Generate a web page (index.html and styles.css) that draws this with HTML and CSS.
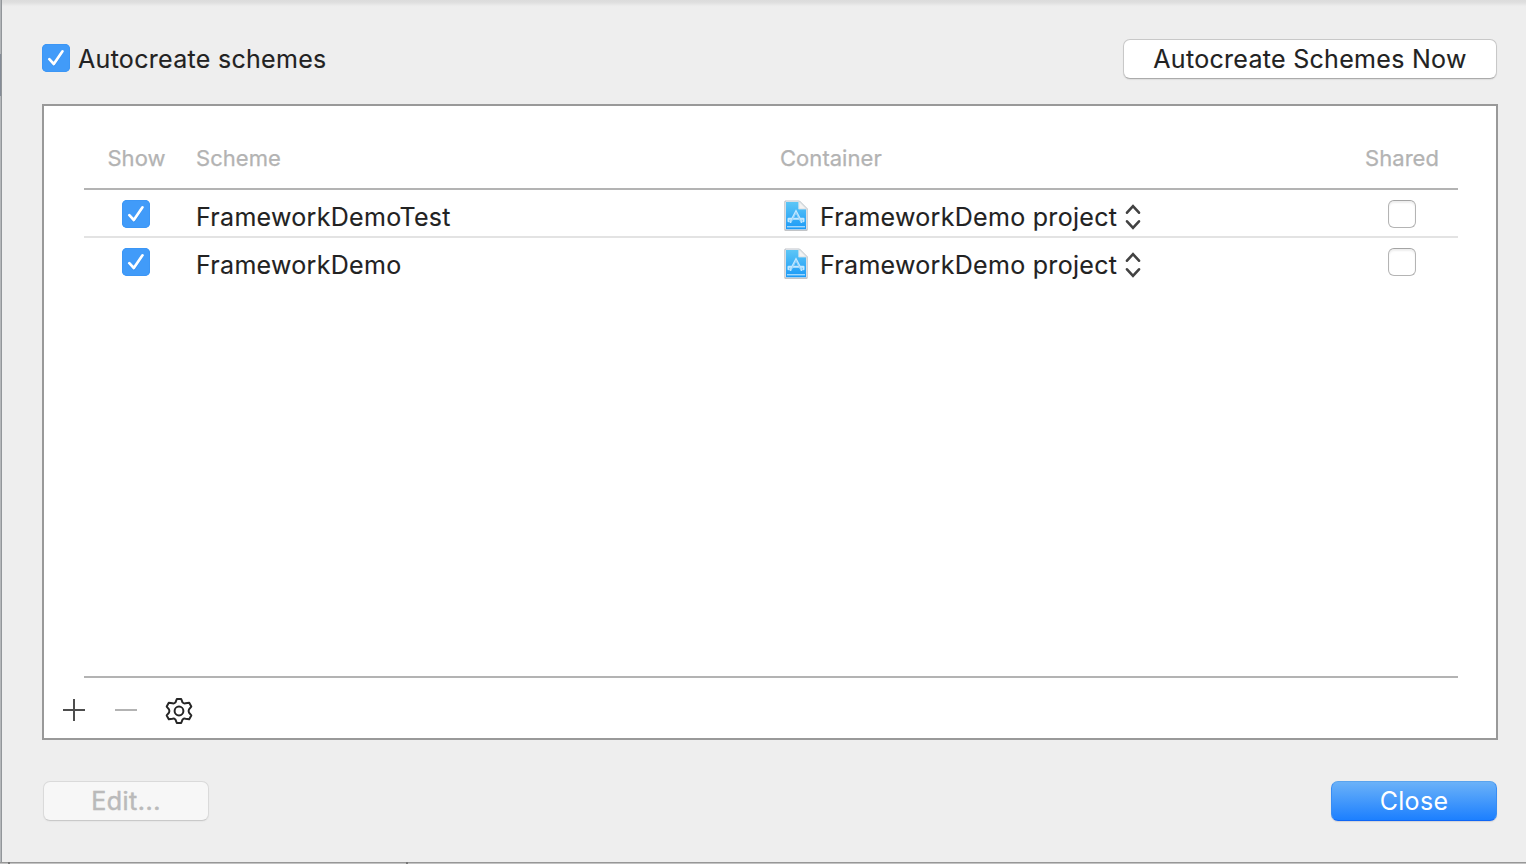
FILE: index.html
```
<!DOCTYPE html>
<html lang="en">
<head>
<meta charset="utf-8">
<title>Manage Schemes</title>
<link rel="stylesheet" href="styles.css">
</head>
<body>
<svg width="0" height="0" class="defs" aria-hidden="true">
  <defs>
    <linearGradient id="doc-fill" x1="0" y1="0" x2="0" y2="1"><stop offset="0" stop-color="#5cc6f6"/><stop offset="1" stop-color="#1b9af7"/></linearGradient>
    <symbol id="check" viewBox="0 0 28 28">
      <path d="M7.3 16.2 12 21 20.5 7.5" fill="none" stroke="#1f78d6" stroke-opacity=".35" stroke-width="2.6" stroke-linecap="round" stroke-linejoin="round"/>
      <path d="M7.3 15.2 11.8 20 20.5 7.3" fill="none" stroke="#fff" stroke-width="2.7" stroke-linecap="round" stroke-linejoin="round"/>
    </symbol>
    <symbol id="project" viewBox="0 0 24 32">
      <path d="M.5 1.5H16L23.5 9V31H.5Z" fill="#b5b5b5" opacity=".6"/>
      <path d="M1 1H15.5L23 8.5V30H1Z" fill="#f6fbff" stroke="#a3abb1" stroke-width=".7"/>
      <path d="M2 2H14.5V9.3H22V29.2H2Z" fill="url(#doc-fill)"/>
      <path d="M15 1.5V8.8H22.3Z" fill="#f3f3f3" stroke="#c8d0d5" stroke-width=".5"/>
      <path d="M3 26.8H21" stroke="#d8f0ff" stroke-width="1"/>
      <path d="M6.5 22 12 11.5 17.5 22M4.5 18.8H19.5M4.5 18.8V21.3M19.5 18.8V21.3" fill="none" stroke="#c3e8ff" stroke-width="2" stroke-linecap="round"/>
      <path d="M12 12.5 7 22M12 12.5 17 22" fill="none" stroke="#62b9f2" stroke-width=".5"/>
    </symbol>
    <symbol id="updown" viewBox="0 0 16 26">
      <path d="M2 8.7 8 2.2 14 8.7M2 17.3 8 23.8 14 17.3" fill="none" stroke="#424242" stroke-width="2.6" stroke-linecap="round" stroke-linejoin="miter"/>
    </symbol>
  </defs>
</svg>
<main class="sheet">
  <header class="topbar">
    <label class="option"><span class="box on"><svg><use href="#check"/></svg></span><span class="label">Autocreate schemes</span></label>
    <button class="button">Autocreate Schemes Now</button>
  </header>
  <section class="panel">
    <div class="table">
      <div class="row head"><span class="center show">Show</span><span>Scheme</span><span>Container</span><span class="center">Shared</span></div>
      <div class="row item">
        <span class="cell-box"><span class="box on"><svg><use href="#check"/></svg></span></span>
        <span class="name">FrameworkDemoTest</span>
        <span class="container"><svg class="doc"><use href="#project"/></svg><span class="name">FrameworkDemo project</span><svg class="updown"><use href="#updown"/></svg></span>
        <span class="cell-box"><span class="box"></span></span>
      </div>
      <div class="row item">
        <span class="cell-box"><span class="box on"><svg><use href="#check"/></svg></span></span>
        <span class="name">FrameworkDemo</span>
        <span class="container"><svg class="doc"><use href="#project"/></svg><span class="name">FrameworkDemo project</span><svg class="updown"><use href="#updown"/></svg></span>
        <span class="cell-box"><span class="box"></span></span>
      </div>
    </div>
    <div class="tools">
      <svg class="tool-line" viewBox="0 0 22 22"><path d="M0 11H22M11 0V22" stroke="#4d4d4d" stroke-width="2"/></svg>
      <svg class="tool-line" viewBox="0 0 22 22"><path d="M0 11H22" stroke="#b3b3b3" stroke-width="2"/></svg>
      <svg class="gear" viewBox="0 0 28 28"><path d="M11.8 2H16.2L17.5 5.4Q18.8 6.7 20.5 6.3L24.2 5.8L26.3 9.6L24 12.4Q23.2 14 24 15.6L26.3 18.4L24.2 22.2L20.5 21.7Q18.8 21.3 17.5 22.6L16.2 26H11.8L10.5 22.6Q9.2 21.3 7.5 21.7L3.8 22.2L1.7 18.4L4 15.6Q4.8 14 4 12.4L1.7 9.6L3.8 5.8L7.5 6.3Q9.2 6.7 10.5 5.4Z" fill="none" stroke="#262626" stroke-width="2" stroke-linejoin="round"/><circle cx="14" cy="14" r="4.4" fill="none" stroke="#262626" stroke-width="2"/></svg>
    </div>
  </section>
  <footer class="bottombar">
    <button class="button small disabled">Edit...</button>
    <button class="button small primary">Close</button>
  </footer>
</main>
<div class="behind"><i></i><i></i></div>
</body>
</html>
```
FILE: styles.css
```
* { box-sizing: border-box; }
body {
  margin: 0;
  width: 1526px;
  height: 864px;
  overflow: hidden;
  padding-left: 2px;
  background: linear-gradient(#b2b5b8 0 54px, #858c97 54px 96px, #b4b7ba 96px);
  font-family: Inter, "Liberation Sans", sans-serif;
  font-size: 25px;
  letter-spacing: .3px;
  -webkit-text-stroke: .12px currentColor;
  color: #222;
}
.defs { position: absolute; }
.sheet {
  display: flex;
  flex-direction: column;
  height: 862px;
  padding: 39px 28px 0 40px;
  background: linear-gradient(#dcdcdc 0, #dedede 2px, #e5e5e5 4px, #ededed 6px, #eee 8px);
  box-shadow: -1px 0 #92969a;
}
.topbar, .bottombar { display: flex; justify-content: space-between; height: 41px; padding-right: 1px; }
.option { display: flex; align-items: center; gap: 8px; height: 38px; }
.label { line-height: 38px; padding-top: 2px; white-space: nowrap; }
.box {
  display: block;
  width: 28px;
  height: 28px;
  border: 1px solid #b4b4b4;
  border-top-color: #a4a4a4;
  border-radius: 6px;
  background: #fff;
  box-shadow: inset 0 2px 2px #eee;
}
.box.on { border: 0; border-radius: 5px; background: #419bf9; box-shadow: inset 0 0 0 1px #3c96f5; }
.box svg { display: block; width: 28px; height: 28px; }
.button {
  width: 374px;
  height: 40px;
  padding: 0;
  border: 1px solid #c8c8c8;
  border-bottom-color: #ababab;
  border-radius: 7px;
  background: #fff;
  box-shadow: 0 1px 1px #ddd;
  color: #222;
  font: inherit;
  letter-spacing: inherit;
  line-height: 38px;
  white-space: nowrap;
}
.button.small { width: 166px; }
.button.disabled { margin-left: 1px; border-color: #dadada; border-bottom-color: #c9c9c9; background: #f7f7f7; color: #bababa; box-shadow: 0 1px 1px #e6e6e6; letter-spacing: .5px; -webkit-text-stroke-width: .5px; }
.button.primary { border-color: #5aa4ee #388df4 #0f66f5; background: linear-gradient(#6db3f8, #1a7eff) border-box; color: #fff; box-shadow: 0 1px 1px #d2d2d6; -webkit-text-stroke-width: 0; }
.panel {
  display: flex;
  flex-direction: column;
  height: 636px;
  margin-top: 24px;
  border: 2px solid #999;
  background: #fff;
}
.table { width: 1374px; height: 572px; margin-left: 40px; padding-top: 34px; border-bottom: 2px solid #b3b3b3; }
.row { display: grid; grid-template-columns: 112px 584px 570px 108px; height: 48px; }
.head { height: 50px; padding-bottom: 12px; border-bottom: 2px solid #b3b3b3; align-items: center; font-size: 22px; line-height: 36px; color: #b3b3b3; letter-spacing: .04px; -webkit-text-stroke-width: .25px; }
.center { width: 104px; text-align: center; }
.show { padding-left: 1px; }
.item:nth-child(2) { border-bottom: 2px solid #e3e3e3; }
.cell-box { display: flex; justify-content: center; width: 104px; padding-top: 10px; }
.name { line-height: 48px; padding-top: 3px; height: 48px; white-space: nowrap; }
.container { display: flex; }
.doc { width: 24px; height: 32px; margin: 10px 12px 0 4px; }
.updown { width: 16px; height: 26px; margin: 14px 0 0 8px; }
.tools { display: flex; align-items: center; height: 60px; padding-left: 19px; }
.tool-line { width: 22px; height: 22px; margin-right: 30px; margin-top: 4px; }
.gear { width: 28px; height: 28px; margin: 6px 0 0 -2px; }
.bottombar { margin-top: 41px; }
.behind { display: flex; gap: 396px; height: 2px; margin-left: -2px; padding-left: 8px; background: linear-gradient(#979797 1px, #c3c3c3 1px); }
.behind i { width: 2px; height: 2px; background: #777; }
```
